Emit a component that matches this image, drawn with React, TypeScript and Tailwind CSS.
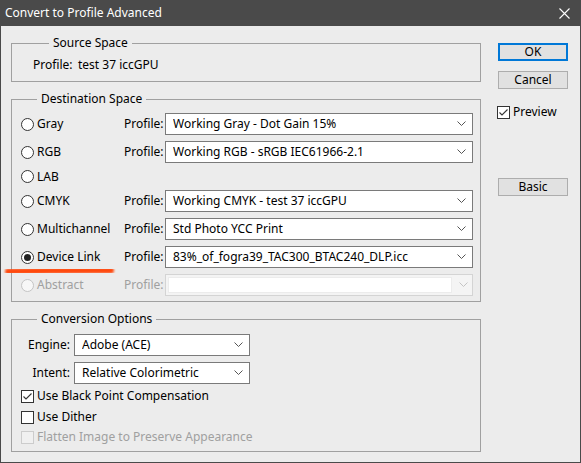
import React from "react";

const font = { fontFamily: '"Noto Sans", "Open Sans", sans-serif' };

function Chevron({ disabled = false }: { disabled?: boolean }) {
  return (
    <svg width="9" height="6" viewBox="0 0 9 6" className="shrink-0">
      <polyline
        points="0.5,0.5 4.5,4.5 8.5,0.5"
        fill="none"
        stroke={disabled ? "#c4c4c4" : "#555555"}
        strokeWidth="1"
      />
    </svg>
  );
}

function Select({ value, disabled = false, className = "" }: { value: string; disabled?: boolean; className?: string }) {
  if (disabled) {
    return (
      <div className={`h-[22px] flex items-stretch border border-[#d4d4d4] bg-[#f4f4f4] ${className}`}>
        <div className="flex-1 m-[2px] bg-white border border-[#ececec]" />
        <div className="w-[18px] flex items-center justify-center">
          <Chevron disabled />
        </div>
      </div>
    );
  }
  return (
    <div className={`h-[22px] flex items-center border border-[#7a7a7a] bg-white pl-[7px] pr-[6px] ${className}`}>
      <span className="flex-1 text-black whitespace-nowrap overflow-hidden">{value}</span>
      <Chevron />
    </div>
  );
}

function Radio({ checked = false, disabled = false }: { checked?: boolean; disabled?: boolean }) {
  return (
    <span
      className={`w-[13px] h-[13px] rounded-full border flex items-center justify-center shrink-0 ${
        disabled ? "border-[#c4c4c4] bg-[#f7f7f7]" : "border-[#333333] bg-white"
      }`}
    >
      {checked && <span className="w-[7px] h-[7px] rounded-full bg-[#222222]" />}
    </span>
  );
}

function Checkbox({ checked = false, disabled = false }: { checked?: boolean; disabled?: boolean }) {
  return (
    <span
      className={`w-[13px] h-[13px] border flex items-center justify-center shrink-0 ${
        disabled ? "border-[#cccccc] bg-[#f0f0f0]" : "border-[#333333] bg-white"
      }`}
    >
      {checked && (
        <svg width="11" height="11" viewBox="0 0 11 11">
          <polyline points="1.5,5.5 4,8 9.5,2.5" fill="none" stroke="#333333" strokeWidth="1.1" />
        </svg>
      )}
    </span>
  );
}

function Group({ title, children, className = "" }: { title: string; children: React.ReactNode; className?: string }) {
  return (
    <fieldset className={`border border-[#a0a0a0] ${className}`}>
      <legend className="ml-[16px] px-[4px] leading-[16px] text-black">{title}</legend>
      {children}
    </fieldset>
  );
}

function DestRow({
  label,
  value,
  checked = false,
  disabled = false,
  h = "h-[22px]",
  mt = "mt-[6px]",
}: {
  label: string;
  value?: string;
  checked?: boolean;
  disabled?: boolean;
  h?: string;
  mt?: string;
}) {
  return (
    <div className={`flex items-center ${h} ${mt}`}>
      <div className="w-[103px] flex items-center gap-[3px]">
        <Radio checked={checked} disabled={disabled} />
        <span className={disabled ? "text-[#a0a0a0]" : "text-black"}>{label}</span>
      </div>
      {(value !== undefined || disabled) && (
        <>
          <span className={`w-[41px] ${disabled ? "text-[#a0a0a0]" : "text-black"}`}>Profile:</span>
          <Select value={value ?? ""} disabled={disabled} className="flex-1" />
        </>
      )}
    </div>
  );
}

function Button({ label, primary = false, className = "" }: { label: string; primary?: boolean; className?: string }) {
  return (
    <div
      className={`w-[70px] h-[18px] flex items-center justify-center bg-[#e1e1e1] text-black ${
        primary ? "border-2 border-[#0078d7]" : "border border-[#adadad]"
      } ${className}`}
    >
      {label}
    </div>
  );
}

export default function App() {
  return (
    <div
      className="w-[581px] h-[463px] flex flex-col bg-[#ececec] border-x border-b border-[#4a4a4a] text-[12px] leading-[16px] overflow-hidden"
      style={font}
    >
      <div className="h-[26px] shrink-0 bg-[#4a4a4a] flex items-center justify-between pl-[4px] pr-[10px]">
        <span className="text-white text-[12px]">Convert to Profile Advanced</span>
        <svg width="11" height="11" viewBox="0 0 11 11">
          <path d="M0.5 0.5 L10.5 10.5 M10.5 0.5 L0.5 10.5" stroke="white" strokeWidth="1.1" />
        </svg>
      </div>

      <div className="relative flex flex-1">
        <div className="ml-[10px] w-[470px] flex flex-col">
          <Group title="Source Space" className="mt-[9px] pt-[6px] pb-[8px] pl-[21px]">
            <div className="flex items-center h-[16px] text-black">
              <span className="w-[45px]">Profile:</span>
              <span>test 37 iccGPU</span>
            </div>
          </Group>

          <Group title="Destination Space" className="mt-[9px] pt-[0px] pb-[5px] pl-[9px] pr-[7px]">
            <DestRow label="Gray" value="Working Gray - Dot Gain 15%" />
            <DestRow label="RGB" value="Working RGB - sRGB IEC61966-2.1" />
            <DestRow label="LAB" h="h-[19px]" mt="mt-[4px]" />
            <DestRow label="CMYK" value="Working CMYK - test 37 iccGPU" mt="mt-[4px]" />
            <DestRow label="Multichannel" value="Std Photo YCC Print" />
            <DestRow label="Device Link" value="83%_of_fogra39_TAC300_BTAC240_DLP.icc" checked />
            <DestRow label="Abstract" disabled />
          </Group>

          <Group title="Conversion Options" className="mt-[9px] pt-[7px] pb-[4px] pl-[9px]">
            <div className="flex items-center h-[22px]">
              <span className="w-[53px] text-right pr-[4px] text-black">Engine:</span>
              <Select value="Adobe (ACE)" className="w-[176px]" />
            </div>
            <div className="flex items-center h-[22px] mt-[6px]">
              <span className="w-[53px] text-right pr-[4px] text-black">Intent:</span>
              <Select value="Relative Colorimetric" className="w-[176px]" />
            </div>
            <div className="flex items-center gap-[3px] h-[20px] mt-[2px]">
              <Checkbox checked />
              <span className="text-black">Use Black Point Compensation</span>
            </div>
            <div className="flex items-center gap-[3px] h-[20px] mt-[1px]">
              <Checkbox />
              <span className="text-black">Use Dither</span>
            </div>
            <div className="flex items-center gap-[3px] h-[20px]">
              <Checkbox disabled />
              <span className="text-[#a0a0a0]">Flatten Image to Preserve Appearance</span>
            </div>
          </Group>
        </div>

        <div className="ml-[17px] w-[70px] flex flex-col">
          <Button label="OK" primary className="mt-[17px]" />
          <Button label="Cancel" className="mt-[10px]" />
          <div className="flex items-center gap-[3px] h-[16px] mt-[15px] -ml-[1px]">
            <Checkbox checked />
            <span className="text-black">Preview</span>
          </div>
          <Button label="Basic" className="mt-[58px]" />
        </div>

        <svg
          className="absolute left-[0px] top-[236px] pointer-events-none"
          width="118"
          height="18"
          viewBox="0 0 118 18"
        >
          <defs>
            <filter id="blur" x="-10%" y="-100%" width="120%" height="300%">
              <feGaussianBlur stdDeviation="1.1" />
            </filter>
          </defs>
          <path
            d="M7 9.4 Q 57 8.4 110 8.6"
            stroke="#ff4a0a"
            strokeWidth="6"
            strokeLinecap="round"
            fill="none"
            filter="url(#blur)"
          />
        </svg>
      </div>
    </div>
  );
}
